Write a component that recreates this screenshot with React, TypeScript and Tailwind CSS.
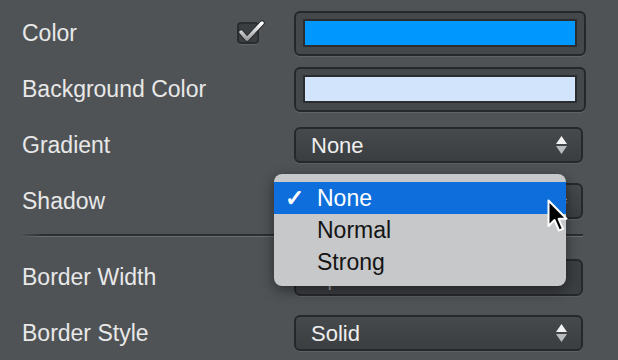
import React from "react";

const font = { fontFamily: '"Liberation Sans", Arial, sans-serif' };

const Arrows = () => (
  <svg width="11" height="19" viewBox="0 0 11 19" className="shrink-0">
    <path d="M5.5 0 L11 8 L0 8 Z" fill="#f2f2f2" />
    <path d="M0 10 L11 10 L5.5 18 Z" fill="#b9bbbd" />
  </svg>
);

const Select = ({ value }: { value: string }) => (
  <div className="w-[289px] h-[36px] rounded-[6px] border-2 border-[#26282a] bg-gradient-to-b from-[#474a4d] to-[#3b3e41] flex items-center justify-between pl-[15px] pr-[14px] shadow-[0_1px_0_rgba(255,255,255,0.08)]">
    <span className="text-[22px] text-[#eeeeee]">{value}</span>
    <Arrows />
  </div>
);

const Swatch = ({ color }: { color: string }) => (
  <div className="w-[292px] h-[45px] rounded-[6px] border-2 border-[#26282a] bg-[#45484b] px-[7px] pt-[6px] pb-[7px] shadow-[0_1px_0_rgba(255,255,255,0.1)]">
    <div className="w-full h-full border-2 border-[#2a2c2e]" style={{ background: color }} />
  </div>
);

// checkbox with the tick poking out of the top right
const Checkbox = () => (
  <div className="relative w-[22px] h-[22px] rounded-[4px] border-2 border-[#2a2c2e] bg-[#3b3e41] shadow-[0_1px_0_rgba(255,255,255,0.1)]">
    <svg width="32" height="30" viewBox="0 0 32 30" className="absolute left-[-4px] top-[-6px]">
      <defs>
        <linearGradient id="chk" x1="0" y1="0" x2="0" y2="1">
          <stop offset="0" stopColor="#ffffff" />
          <stop offset="1" stopColor="#9ea0a2" />
        </linearGradient>
      </defs>
      <polyline
        points="6,14 12,21 27,5"
        fill="none"
        stroke="#2a2c2e"
        strokeWidth="5.5"
        strokeLinecap="round"
        strokeLinejoin="round"
      />
      <polyline
        points="6,14 12,21 27,5"
        fill="none"
        stroke="url(#chk)"
        strokeWidth="3.5"
        strokeLinecap="round"
        strokeLinejoin="round"
      />
    </svg>
  </div>
);

const Row = ({
  label,
  check,
  children,
}: {
  label: string;
  check?: boolean;
  children: React.ReactNode;
}) => (
  <div className="h-[56px] grid grid-cols-[215px_57px_292px] items-center pl-[22px]">
    <span className="text-[23px] text-[#e8e8e8]">{label}</span>
    <div>{check && <Checkbox />}</div>
    <div>{children}</div>
  </div>
);

const Cursor = () => (
  <svg width="24" height="34" viewBox="0 0 24 34" className="absolute left-[547px] top-[199px]">
    <path
      d="M1.5 1.5 L1.5 27 L7.5 21 L12 31.5 L16 29.8 L11.6 19.8 L19.5 19.8 Z"
      fill="#000"
      stroke="#fff"
      strokeWidth="2"
      strokeLinejoin="round"
    />
  </svg>
);

const Menu = () => (
  <div className="absolute left-[274px] top-[174px] w-[292px] h-[112px] rounded-[8px] bg-[#c7c8c9] py-[8px] shadow-[0_4px_14px_rgba(0,0,0,0.45)] text-[23px]">
    <div className="h-[32px] bg-[#0e6fdc] text-white flex items-center">
      <span className="w-[43px] pl-[11px] text-[23px] font-bold">✓</span>
      <span>None</span>
    </div>
    <div className="h-[32px] flex items-center pl-[43px] text-[#141414]">Normal</div>
    <div className="h-[32px] flex items-center pl-[43px] text-[#141414]">Strong</div>
  </div>
);

export default function App() {
  return (
    <div
      className="relative w-[618px] h-[360px] overflow-hidden bg-[#4f5356] pt-[5px]"
      style={font}
    >
      <Row label="Color" check>
        <Swatch color="#0098ff" />
      </Row>
      <Row label="Background Color">
        <Swatch color="#d1e4fb" />
      </Row>
      <Row label="Gradient">
        <Select value="None" />
      </Row>
      <Row label="Shadow">
        <Select value="None" />
      </Row>

      <div className="h-[20px] pt-[5px] pl-[20px] pr-[35px]">
        <div className="h-[2px] bg-gradient-to-r from-transparent via-[#2c2f31] via-[4%] to-[#2c2f31]" />
        <div className="h-[1px] bg-gradient-to-r from-transparent via-[#6b6f72] via-[4%] to-[#6b6f72]" />
      </div>

      <Row label="Border Width">
        <div className="w-[289px] h-[37px] rounded-[6px] border-2 border-[#26282a] bg-[#3c3f42] flex items-center pl-[13px] shadow-[0_1px_0_rgba(255,255,255,0.08)]">
          <span className="text-[22px] text-[#9a9c9e]">1 px</span>
        </div>
      </Row>
      <Row label="Border Style">
        <Select value="Solid" />
      </Row>

      <Menu />
      <Cursor />
    </div>
  );
}
